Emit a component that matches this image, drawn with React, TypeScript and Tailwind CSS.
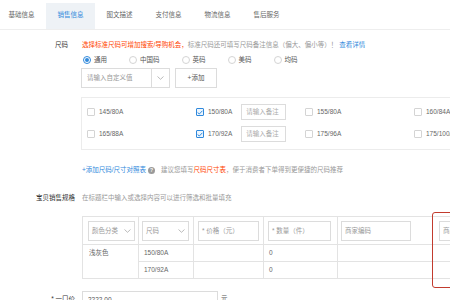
import React from "react";

const tabs = ["基础信息", "销售信息", "图文描述", "支付信息", "物流信息", "售后服务"];
const radios = ["通用", "中国码", "英码", "美码", "均码"];

type Size = { label: string; on?: boolean };
const sizeRows: Size[][] = [
  [{ label: "145/80A" }, { label: "150/80A", on: true }, { label: "155/80A" }, { label: "160/84A" }],
  [{ label: "165/88A" }, { label: "170/92A", on: true }, { label: "175/96A" }, { label: "175/100A" }],
];

function Chevron() {
  return (
    <svg width="7" height="4" viewBox="0 0 7 4" className="shrink-0">
      <polyline points="0.5,0.5 3.5,3.3 6.5,0.5" fill="none" stroke="#aaa" strokeWidth="0.8" />
    </svg>
  );
}

function Checkbox({ on }: { on?: boolean }) {
  return (
    <span
      className={
        on
          ? "w-[8px] h-[8px] border border-[#3089dc] bg-[#eef6fd] rounded-[1px] flex items-center justify-center shrink-0"
          : "w-[8px] h-[8px] border border-[#d4d4d4] bg-white rounded-[1px] shrink-0"
      }
    >
      {on && (
        <svg width="6" height="5" viewBox="0 0 6 5">
          <polyline points="0.6,2.5 2.3,4 5.4,0.8" fill="none" stroke="#3089dc" strokeWidth="1" />
        </svg>
      )}
    </span>
  );
}

function Radio({ on }: { on?: boolean }) {
  return (
    <span
      className={
        on
          ? "w-[8px] h-[8px] rounded-full border border-[#3089dc] flex items-center justify-center shrink-0"
          : "w-[8px] h-[8px] rounded-full border border-[#d4d4d4] shrink-0"
      }
    >
      {on && <span className="w-[4px] h-[4px] rounded-full bg-[#3089dc]" />}
    </span>
  );
}

function HeadInput({ text, w, select }: { text: string; w: string; select?: boolean }) {
  return (
    <div className={`${w} h-[20px] border border-[#dcdcdc] bg-white flex items-center justify-between px-[3px] text-[#999]`}>
      <span className="whitespace-nowrap">{text}</span>
      {select && <Chevron />}
    </div>
  );
}

export default function App() {
  return (
    <div className="relative w-[450px] h-[300px] overflow-hidden bg-white text-[6.5px] leading-[12px] text-[#666] font-['Liberation_Sans','Noto_Sans_CJK_SC',sans-serif]">
      {/* Tabs */}
      <div className="h-[30px] border-b border-[#eee] flex items-end pl-0 ml-[-3px]">
        {tabs.map((t, i) => (
          <div
            key={t}
            className={
              i === 1
                ? "w-[49px] h-[26px] flex items-center justify-center pb-[2px] bg-[#eef2f6] text-[#3089dc]"
                : "w-[49px] h-[26px] flex items-center justify-center pb-[2px] text-[#666]"
            }
          >
            {t}
          </div>
        ))}
      </div>

      <div className="pt-[9px]">
        {/* 尺码 */}
        <div className="flex h-[12px] items-center">
          <div className="w-[82px] text-right pr-[14px] text-[#333] shrink-0">尺码</div>
          <div className="whitespace-nowrap">
            <span className="text-[#ff4400]">选择标准尺码可增加搜索/导购机会，</span>
            <span className="text-[#999]">标准尺码还可填写尺码备注信息（偏大、偏小等）！</span>
            <span className="text-[#3089dc] ml-[2px]">查看详情</span>
          </div>
        </div>

        {/* Radios */}
        <div className="flex items-center h-[12px] mt-[3px] ml-[83px] gap-[22px]">
          {radios.map((r, i) => (
            <div key={r} className="flex items-center gap-[3px] text-[#555]">
              <Radio on={i === 0} />
              <span>{r}</span>
            </div>
          ))}
        </div>

        {/* Custom value */}
        <div className="flex items-center mt-[2px] ml-[81px] gap-[5px]">
          <div className="w-[89px] h-[20px] border border-[#dcdcdc] flex">
            <div className="flex-1 flex items-center pl-[5px] text-[#999]">请输入自定义值</div>
            <div className="w-[18px] border-l border-[#dcdcdc] flex items-center justify-center">
              <Chevron />
            </div>
          </div>
          <div className="w-[42px] h-[20px] border border-[#dcdcdc] flex items-center justify-center text-[#555]">
            +添加
          </div>
        </div>

        {/* Size checkbox box */}
        <div className="mt-[9px] ml-[81px] w-[420px] border border-[#ececec] pl-[5px] pt-[6px] pb-[7px] flex flex-col gap-[6px]">
          {sizeRows.map((row, ri) => (
            <div key={ri} className="grid grid-cols-[109px_109px_109px_109px] h-[16px]">
              {row.map((s) => (
                <div key={s.label} className="flex items-center whitespace-nowrap">
                  <Checkbox on={s.on} />
                  <span className="ml-[4px] text-[#666]">{s.label}</span>
                  {s.on && (
                    <div className="ml-[9px] w-[45px] h-[16px] border border-[#dcdcdc] flex items-center pl-[4px] text-[#aaa]">
                      请输入备注
                    </div>
                  )}
                </div>
              ))}
            </div>
          ))}
        </div>

        {/* Size chart tip */}
        <div className="flex items-center h-[12px] mt-[14px] ml-[82px] whitespace-nowrap">
          <span className="text-[#3089dc]">+添加尺码/尺寸对照表</span>
          <span className="ml-[2px] w-[7px] h-[7px] rounded-full bg-[#9a9a9a] text-white text-[5px] leading-[7px] text-center font-bold">?</span>
          <span className="ml-[6px] text-[#999]">建议您填写</span>
          <span className="text-[#ff4400]">尺码尺寸表</span>
          <span className="text-[#999]">，便于消费者下单得到更便捷的尺码推荐</span>
        </div>

        {/* Sales spec */}
        <div className="flex items-center h-[12px] mt-[16px] whitespace-nowrap">
          <div className="w-[82px] text-right pr-[7px] text-[#333] shrink-0">宝贝销售规格</div>
          <span className="text-[#999]">在标题栏中输入或选择内容可以进行筛选和批量填充</span>
        </div>

        {/* Spec table */}
        <table className="mt-[12px] ml-[82px] border-collapse table-fixed w-[410px]">
          <colgroup>
            <col className="w-[56px]" />
            <col className="w-[55px]" />
            <col className="w-[70px]" />
            <col className="w-[74px]" />
            <col className="w-[95px]" />
            <col className="w-[60px]" />
          </colgroup>
          <tbody>
            <tr className="h-[28px]">
              <td className="border border-[#e3e3e3] pl-[5px]">
                <HeadInput text="颜色分类" w="w-[47px]" select />
              </td>
              <td className="border border-[#e3e3e3] pl-[3px]">
                <HeadInput text="尺码" w="w-[47px]" select />
              </td>
              <td className="border border-[#e3e3e3] pl-[4px]">
                <HeadInput text="* 价格（元）" w="w-[61px]" />
              </td>
              <td className="border border-[#e3e3e3] pl-[4px]">
                <HeadInput text="* 数量（件）" w="w-[63px]" />
              </td>
              <td className="border border-[#e3e3e3] pl-[3px]">
                <HeadInput text="商家编码" w="w-[70px]" />
              </td>
              <td className="border border-[#e3e3e3] pl-[6px]">
                <HeadInput text="商品条形码" w="w-[60px]" />
              </td>
            </tr>
            <tr className="h-[17px]">
              <td rowSpan={2} className="border border-[#e3e3e3] pl-[6px] align-top pt-[2px] text-[#666]">
                浅灰色
              </td>
              <td className="border border-[#e3e3e3] pl-[5px]">150/80A</td>
              <td className="border border-[#e3e3e3]" />
              <td className="border border-[#e3e3e3] pl-[5px]">0</td>
              <td className="border border-[#e3e3e3]" />
              <td className="border border-[#e3e3e3]" />
            </tr>
            <tr className="h-[17px]">
              <td className="border border-[#e3e3e3] pl-[5px]">170/92A</td>
              <td className="border border-[#e3e3e3]" />
              <td className="border border-[#e3e3e3] pl-[5px]">0</td>
              <td className="border border-[#e3e3e3]" />
              <td className="border border-[#e3e3e3]" />
            </tr>
          </tbody>
        </table>

        {/* Price */}
        <div className="flex items-start mt-[12px] whitespace-nowrap">
          <div className="w-[82px] text-right pr-[7px] text-[#333] shrink-0 pt-[2px]">* 一口价</div>
          <div className="w-[136px] h-[18px] border border-[#dcdcdc] flex items-center pl-[5px] text-[#555]">2222.00</div>
          <span className="ml-[3px] pt-[2px] text-[#555]">元</span>
        </div>
      </div>

      {/* red annotation box */}
      <div className="absolute left-[432px] top-[212px] w-[40px] h-[76px] border-[1.5px] border-[#c23b2e] rounded-[3px]" />
    </div>
  );
}
